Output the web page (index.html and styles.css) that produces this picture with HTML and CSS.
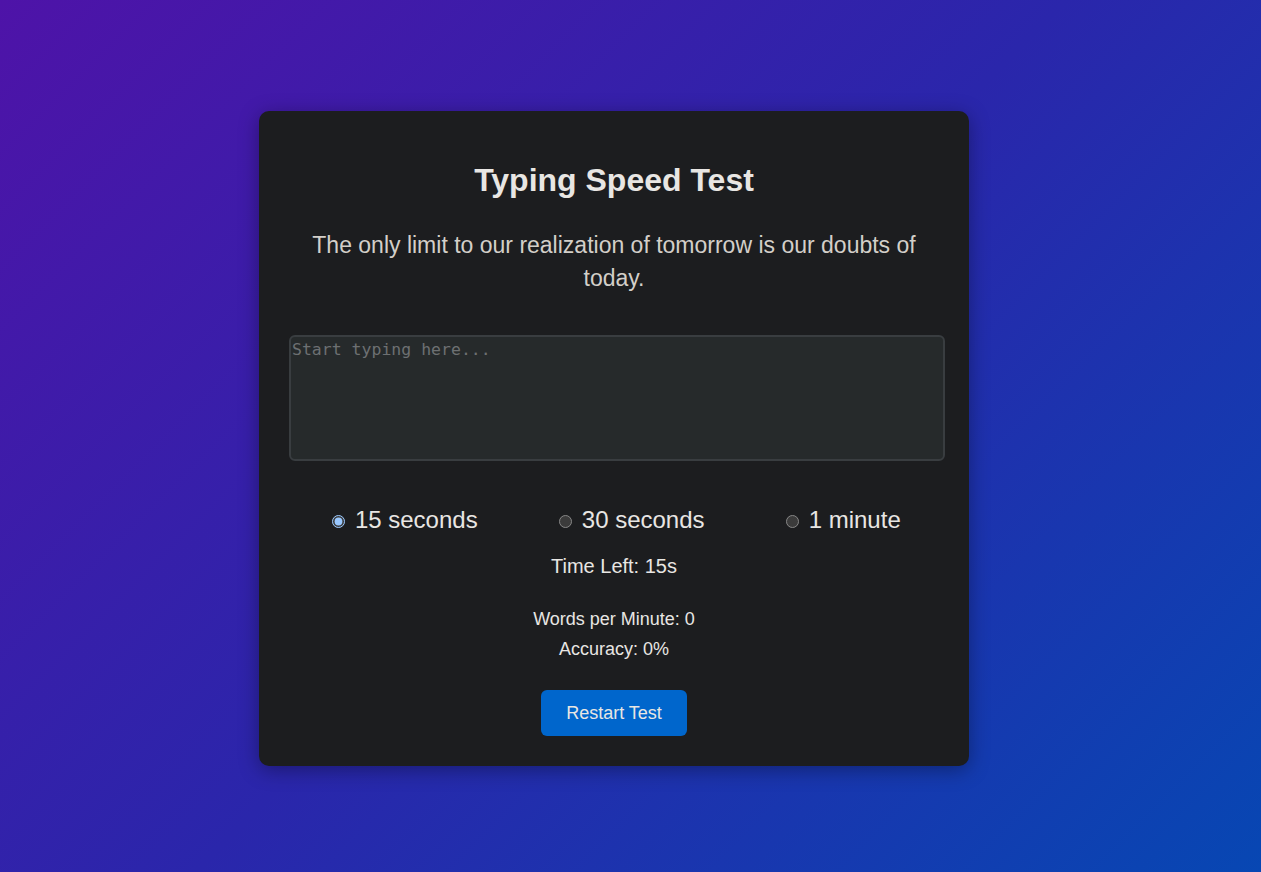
FILE: index.html
```html
<!DOCTYPE html>
<html lang="en">
<head>
<meta charset="utf-8">
<title>Typing Speed Test</title>
<link rel="stylesheet" href="styles.css">
</head>
<body>
  <div class="card">
    <h1 class="title">Typing Speed Test</h1>
    <p class="quote">The only limit to our realization of tomorrow is our doubts of today.</p>
    <textarea class="input" placeholder="Start typing here..."></textarea>
    <div class="options">
      <label class="option"><input type="radio" name="time" checked> 15 seconds</label>
      <label class="option"><input type="radio" name="time"> 30 seconds</label>
      <label class="option"><input type="radio" name="time"> 1 minute</label>
    </div>
    <div class="timer">Time Left: 15s</div>
    <div class="stats">
      <p class="stat">Words per Minute: 0</p>
      <p class="stat">Accuracy: 0%</p>
    </div>
    <button class="restart">Restart Test</button>
  </div>
</body>
</html>
```

FILE: styles.css
```css
html {
  color-scheme: dark;
}
body {
  margin: 0;
  min-height: 100vh;
  box-sizing: border-box;
  padding: 5px 33px 0 0;
  display: flex;
  justify-content: center;
  align-items: center;
  background: linear-gradient(135deg, #4e13a8 0%, #2a26ab 50%, #0747b3 100%);
  font-family: "Liberation Sans", Arial, sans-serif;
  color: #e8e6e3;
}
.card {
  width: 650px;
  padding: 30px;
  background: #1c1d1f;
  border-radius: 10px;
  box-shadow: 0 4px 20px rgba(0, 0, 0, 0.35);
  text-align: center;
}
.title {
  font-size: 32px;
  font-weight: bold;
  margin: 21px 0 30px;
  color: #e8e6e3;
}
.quote {
  font-size: 23px;
  line-height: 33px;
  margin: 0 0 40px;
  color: #d3cfc9;
}
.input {
  display: block;
  width: 651px;
  height: 119px;
  margin: 0;
  padding: 3px 0 0 1px;
  border: 2px solid #393d40;
  border-radius: 6px;
  background: #262a2b;
  color: #e8e6e3;
  font-family: "DejaVu Sans Mono", monospace;
  font-size: 16.5px;
  resize: none;
  outline: none;
}
.input::placeholder {
  color: #6d7072;
}
.options {
  display: flex;
  justify-content: space-around;
  margin-top: 45px;
  font-size: 24px;
  color: #e8e6e3;
}
.timer {
  margin-top: 21px;
  font-size: 20px;
}
.stats {
  margin-top: 26px;
}
.stat {
  margin: 0;
  font-size: 18px;
  line-height: 30px;
}
.restart {
  margin-top: 26px;
  padding: 12px 25px;
  border: none;
  border-radius: 6px;
  background: #0066cc;
  color: #e8e6e3;
  font-family: "Liberation Sans", Arial, sans-serif;
  font-size: 18px;
  line-height: 22px;
}
```
